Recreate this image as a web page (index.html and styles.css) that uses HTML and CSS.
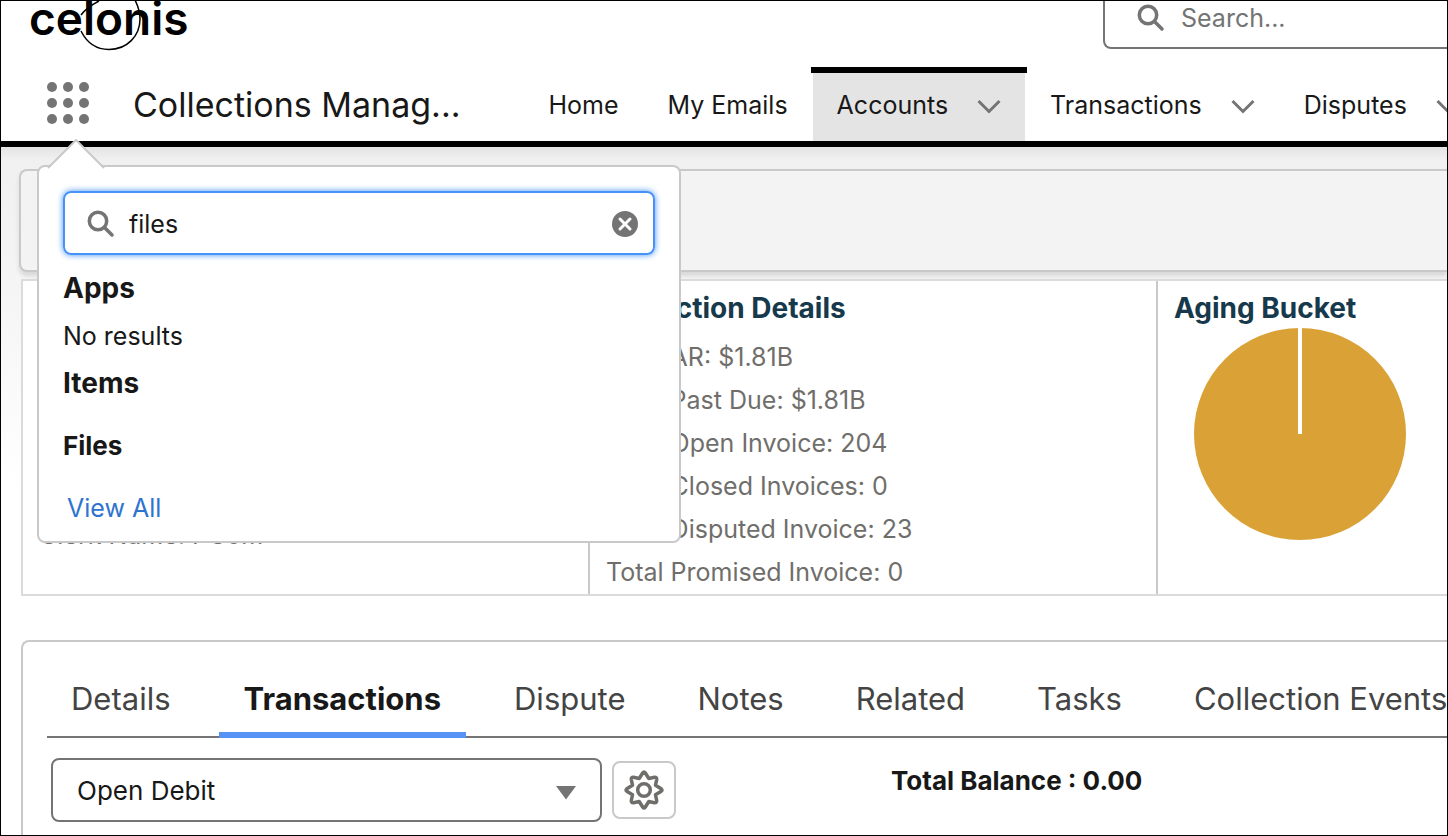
FILE: index.html
```
<!DOCTYPE html>
<html lang="en">
<head>
<meta charset="utf-8">
<title>Collections Management</title>
<link rel="stylesheet" href="styles.css">
</head>
<body>
<div class="frame">
  <header class="header">
    <div class="logo">celonis
      <svg class="logo-ring" viewBox="0 0 64 50" width="64" height="50" aria-hidden="true"><path d="M21 0Q9 6 3 14M3 30C9 42 19 48.500 31 48.500C49 48.500 62 35 62 18C62 11 60 5 57 -1"/></svg>
    </div>
    <label class="global-search">
      <svg class="icon" viewBox="0 0 28 28" width="28" height="28" aria-hidden="true"><circle cx="11" cy="11" r="8.700"/><path d="M17.500 17.500L25 25"/></svg>
      <input type="search" placeholder="Search..." aria-label="Search">
    </label>
  </header>

  <nav class="nav">
    <div class="launcher">
      <button class="waffle" aria-label="App Launcher">
        <svg viewBox="0 0 42 42" width="42" height="42"><circle cx="5" cy="5" r="5"/><circle cx="21" cy="5" r="5"/><circle cx="37" cy="5" r="5"/><circle cx="5" cy="21" r="5"/><circle cx="21" cy="21" r="5"/><circle cx="37" cy="21" r="5"/><circle cx="5" cy="37" r="5"/><circle cx="21" cy="37" r="5"/><circle cx="37" cy="37" r="5"/></svg>
      </button>
      <section class="popover" aria-label="App Launcher results">
        <svg class="nubbin" viewBox="0 0 58 30" width="58" height="30" aria-hidden="true"><path d="M1 29L29 1L57 29"/></svg>
        <label class="app-search">
          <svg class="icon" viewBox="0 0 28 28" width="28" height="28" aria-hidden="true"><circle cx="11" cy="11" r="8.700"/><path d="M17.500 17.500L25 25"/></svg>
          <input type="text" value="files" aria-label="Search apps and items">
          <button class="clear" aria-label="Clear">
            <svg viewBox="0 0 26 26" width="26" height="26"><circle cx="13" cy="13" r="13"/><path d="M8 8L18 18M18 8L8 18"/></svg>
          </button>
        </label>
        <h2 class="result-title">Apps</h2>
        <p class="result-text">No results</p>
        <h2 class="result-title">Items</h2>
        <h3 class="result-item">Files</h3>
        <a class="view-all" href="#">View All</a>
      </section>
    </div>
    <h1 class="app-name">Collections Manag...</h1>
    <ul class="nav-items">
      <li><a href="#">Home</a></li>
      <li><a href="#">My Emails</a></li>
      <li class="active"><a href="#">Accounts</a><button class="chev" aria-label="Accounts list"><svg viewBox="0 0 24 16" width="24" height="16"><path d="M1.500 2L12 12.500L22.500 2"/></svg></button></li>
      <li><a href="#">Transactions</a><button class="chev" aria-label="Transactions list"><svg viewBox="0 0 24 16" width="24" height="16"><path d="M1.500 2L12 12.500L22.500 2"/></svg></button></li>
      <li><a href="#">Disputes</a><button class="chev" aria-label="Disputes list"><svg viewBox="0 0 24 16" width="24" height="16"><path d="M1.500 2L12 12.500L22.500 2"/></svg></button></li>
    </ul>
  </nav>

  <main class="main">
    <div class="highlights"></div>
    <section class="summary">
      <div class="col account">
        <p>Clerk Name: PCom</p>
      </div>
      <div class="col">
        <h2>Collection Details</h2>
        <p>Total AR: $1.81B</p>
        <p>Total Past Due: $1.81B</p>
        <p>Total Open Invoice: 204</p>
        <p>Total Closed Invoices: 0</p>
        <p>Total Disputed Invoice: 23</p>
        <p>Total Promised Invoice: 0</p>
      </div>
      <div class="col">
        <h2>Aging Bucket</h2>
        <svg class="pie" viewBox="0 0 212 212" width="212" height="212" role="img" aria-label="Aging bucket pie chart"><circle cx="106" cy="106" r="106"/><path d="M106 0V106"/></svg>
      </div>
    </section>

    <section class="record">
      <div class="tabs" role="tablist">
        <button role="tab">Details</button>
        <button role="tab" class="selected" aria-selected="true">Transactions</button>
        <button role="tab">Dispute</button>
        <button role="tab">Notes</button>
        <button role="tab">Related</button>
        <button role="tab">Tasks</button>
        <button role="tab">Collection Events</button>
      </div>
      <div class="toolbar">
        <div class="picker">
          <select aria-label="Transaction list"><option>Open Debit</option></select>
          <svg class="caret" viewBox="0 0 20 14" width="20" height="14" aria-hidden="true"><path d="M0 0H20L10 13.500Z"/></svg>
        </div>
        <button class="settings" aria-label="Settings">
          <svg viewBox="0 0 40 40" width="40" height="40"><path d="M18.800 2.800Q20 1.200 21.200 2.800L24.800 8.500L30.500 7.300Q32.900 7.100 32.700 9.500L31.500 15.200L37.200 18.800Q38.800 20 37.200 21.200L31.500 24.800L32.700 30.500Q32.900 32.900 30.500 32.700L24.800 31.500L21.200 37.200Q20 38.800 18.800 37.200L15.200 31.500L9.500 32.700Q7.100 32.900 7.300 30.500L8.500 24.800L2.800 21.200Q1.200 20 2.800 18.800L8.500 15.200L7.300 9.500Q7.100 7.100 9.500 7.300L15.200 8.500Z"/><circle cx="20" cy="20" r="6.300"/></svg>
        </button>
        <strong class="balance">Total Balance : 0.00</strong>
      </div>
    </section>
  </main>
</div>
</body>
</html>
```
FILE: styles.css
```
* { box-sizing: border-box; }
body, h1, h2, h3, p, ul { margin: 0; padding: 0; }
body {
  font-family: Inter, "Liberation Sans", sans-serif;
  font-size: 25px;
  color: #181818;
  background: #fff;
}
button, input, select { font: inherit; color: inherit; }
button { background: none; border: 0; padding: 0; }
svg { display: block; flex: none; }
a { color: inherit; text-decoration: none; }

.frame {
  height: 100vh;
  border: 1px solid #000;
  overflow: hidden;
}

.header {
  height: 66px;
  display: flex;
  justify-content: space-between;
  align-items: flex-start;
}
.logo {
  position: relative;
  margin: -12px 0 0 28px;
  font-size: 46px;
  line-height: 58px;
  font-weight: 600;
  color: #000;
}
.logo-ring { position: absolute; left: 49px; top: 12px; }
.logo-ring path { fill: none; stroke: #000; stroke-width: 1.500; }

.icon { fill: none; stroke: #747474; stroke-width: 3.500; stroke-linecap: round; }

.global-search {
  width: 344px;
  height: 64px;
  margin-top: -16px;
  padding: 2px 0 0 32px;
  display: flex;
  align-items: center;
  gap: 16px;
  border: 2px solid #747474;
  border-right: 0;
  border-radius: 8px 0 0 8px;
}
.global-search input {
  flex: 1;
  min-width: 0;
  border: 0;
  outline: 0;
  padding: 0;
  background: none;
}
.global-search input::placeholder { color: #747474; opacity: 1; }

.nav {
  display: flex;
  height: 80px;
  padding-left: 46px;
  border-bottom: 6px solid #000;
}
.launcher { position: relative; flex: none; width: 42px; padding-top: 15px; }
.waffle svg { fill: #747474; }
.app-name {
  flex: none;
  margin-left: 44px;
  padding-top: 16px;
  font-size: 34px;
  line-height: 44px;
  font-weight: 400;
  white-space: nowrap;
}
.nav-items { display: flex; flex: none; gap: 1px; list-style: none; margin-left: 64px; }
.nav-items li {
  flex: none;
  display: flex;
  align-items: center;
  gap: 29px;
  padding: 2px 24px 0;
}
.nav-items .active { position: relative; background: #e4e4e4; }
.nav-items .active::before {
  content: "";
  position: absolute;
  left: -2px;
  right: -2px;
  top: 0;
  height: 6px;
  background: #000;
}
.nav-items .chev { padding-top: 4px; }
.chev path { fill: none; stroke: #747474; stroke-width: 3; }

.popover {
  position: absolute;
  z-index: 5;
  left: -10px;
  top: 98px;
  width: 644px;
  padding: 24px 24px 17px;
  background: #fff;
  border: 2px solid #c9c9c9;
  border-radius: 8px;
}
.nubbin { position: absolute; left: 8px; top: -28px; }
.nubbin path { fill: #fff; stroke: #c9c9c9; stroke-width: 2; }
.app-search {
  display: flex;
  align-items: center;
  gap: 14px;
  height: 64px;
  margin-bottom: 17px;
  padding: 2px 15px 0 22px;
  border: 2px solid #4692f8;
  border-radius: 8px;
  box-shadow: 0 0 6px #4692f8;
}
.app-search input { flex: 1; min-width: 0; border: 0; outline: 0; padding: 0; background: none; }
.clear circle { fill: #747474; }
.clear path { stroke: #fff; stroke-width: 3; stroke-linecap: round; }
.result-title { font-size: 28px; line-height: 32px; font-weight: 700; }
.result-text { line-height: 32px; margin: 16px 0 15px; }
.result-item { font-size: 26px; line-height: 32px; font-weight: 700; margin-top: 31px; }
.view-all { display: block; color: #2e74cf; line-height: 32px; margin: 30px 0 0 4px; }

.main {
  padding: 22px 0 0 18px;
  background: linear-gradient(#e4e4e4, #f0f0f0 12px, #f3f3f3 100px, #fff 340px);
}
.highlights {
  height: 103px;
  background: #f3f3f3;
  border: 2px solid #c9c9c9;
  border-right: 0;
  border-radius: 8px 0 0 8px;
  box-shadow: 0 4px 4px #d8d8d8;
}
.summary {
  position: relative;
  display: grid;
  grid-template-columns: 567px 568px 1fr;
  margin: 7px 0 0 2px;
  background: #fff;
  border: 2px solid #dbdbdb;
  border-right: 0;
}
.col { padding: 10px 17px 0 16px; border-right: 2px solid #c9c9c9; color: #706e6b; }
.col:last-child { border-right: 0; }
.col h2 { font-size: 28px; line-height: 34px; font-weight: 700; color: #16394b; margin-bottom: 11px; }
.col p { line-height: 43px; white-space: nowrap; }
.account { display: flex; flex-direction: column; justify-content: flex-end; padding-bottom: 37px; }
.pie { margin: -8px 0 0 20px; }
.pie circle { fill: #daa236; }
.pie path { stroke: #fff; stroke-width: 4; }

.record {
  margin: 44px 0 0 2px;
  background: #fff;
  border: 2px solid #c9c9c9;
  border-right: 0;
  border-radius: 8px 0 0 0;
  padding: 24px 0 20px 24px;
}
.tabs { display: flex; gap: 24px; border-bottom: 2px solid #747474; }
.tabs button {
  flex: none;
  height: 72px;
  margin-bottom: -2px;
  padding: 0 24px 2px;
  font-size: 31px;
  color: #444;
  border-bottom: 6px solid transparent;
}
.tabs .selected { padding: 0 25px 2px; font-weight: 700; color: #181818; border-bottom-color: #5792f5; }
.toolbar { display: flex; padding: 20px 0 0 4px; }
.picker { position: relative; width: 551px; }
.picker select {
  appearance: none;
  width: 100%;
  height: 64px;
  padding: 0 24px;
  font-size: 26px;
  border: 2px solid #747474;
  border-radius: 8px;
  background: #fff;
}
.caret { position: absolute; right: 26px; top: 28px; fill: #747474; }
.settings {
  display: grid;
  place-items: center;
  width: 64px;
  height: 58px;
  margin: 3px 0 0 10px;
  border: 2px solid #c9c9c9;
  border-radius: 8px;
}
.settings svg { fill: none; stroke: #706e6b; stroke-width: 3.500; stroke-linejoin: round; }
.balance { margin: 7px 0 0 215px; font-size: 26px; line-height: 32px; }
```
